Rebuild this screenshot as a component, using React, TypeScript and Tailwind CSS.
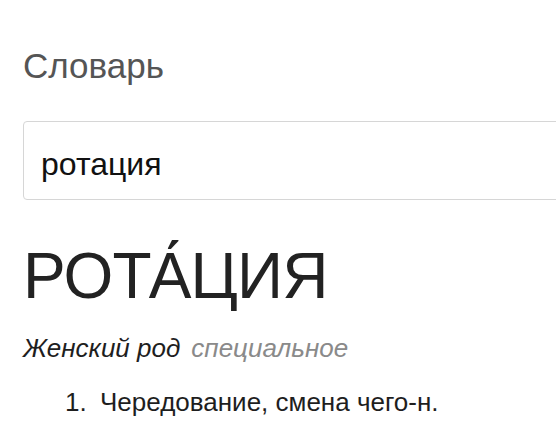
import React from 'react'

const font = { fontFamily: '"Liberation Sans", Arial, sans-serif' }

export default function App() {
  return (
    <div className="w-[556px] h-[424px] overflow-hidden bg-white text-[#222]" style={font}>
      <div className="pl-[23px]">
        <h2 className="pt-[46px] text-[35px] leading-[40px] text-[#555]">Словарь</h2>
        <div className="mt-[35px] w-[600px] h-[79px] border border-[#d6d6d6] rounded-[4px] flex items-center pl-[17px] pt-[6px] text-[32px] leading-[36px] text-[#111]">
          ротация
        </div>
        <h1 className="mt-[44px] text-[64px] leading-[64px] tracking-[-0.8px] text-[#222]">РОТА́ЦИЯ</h1>
        <div className="mt-[25px] leading-[30px] italic">
          <span className="text-[26px] text-[#1e1e1e]">Женский род</span>
          <span className="ml-[11px] text-[26px] text-[#8a8a8a]">специальное</span>
        </div>
        <div className="mt-[20px] ml-[42px] flex text-[26px] leading-[30px] text-[#1e1e1e]">
          <span className="w-[35px]">1.</span>
          <span>Чередование, смена чего-н.</span>
        </div>
      </div>
    </div>
  )
}
